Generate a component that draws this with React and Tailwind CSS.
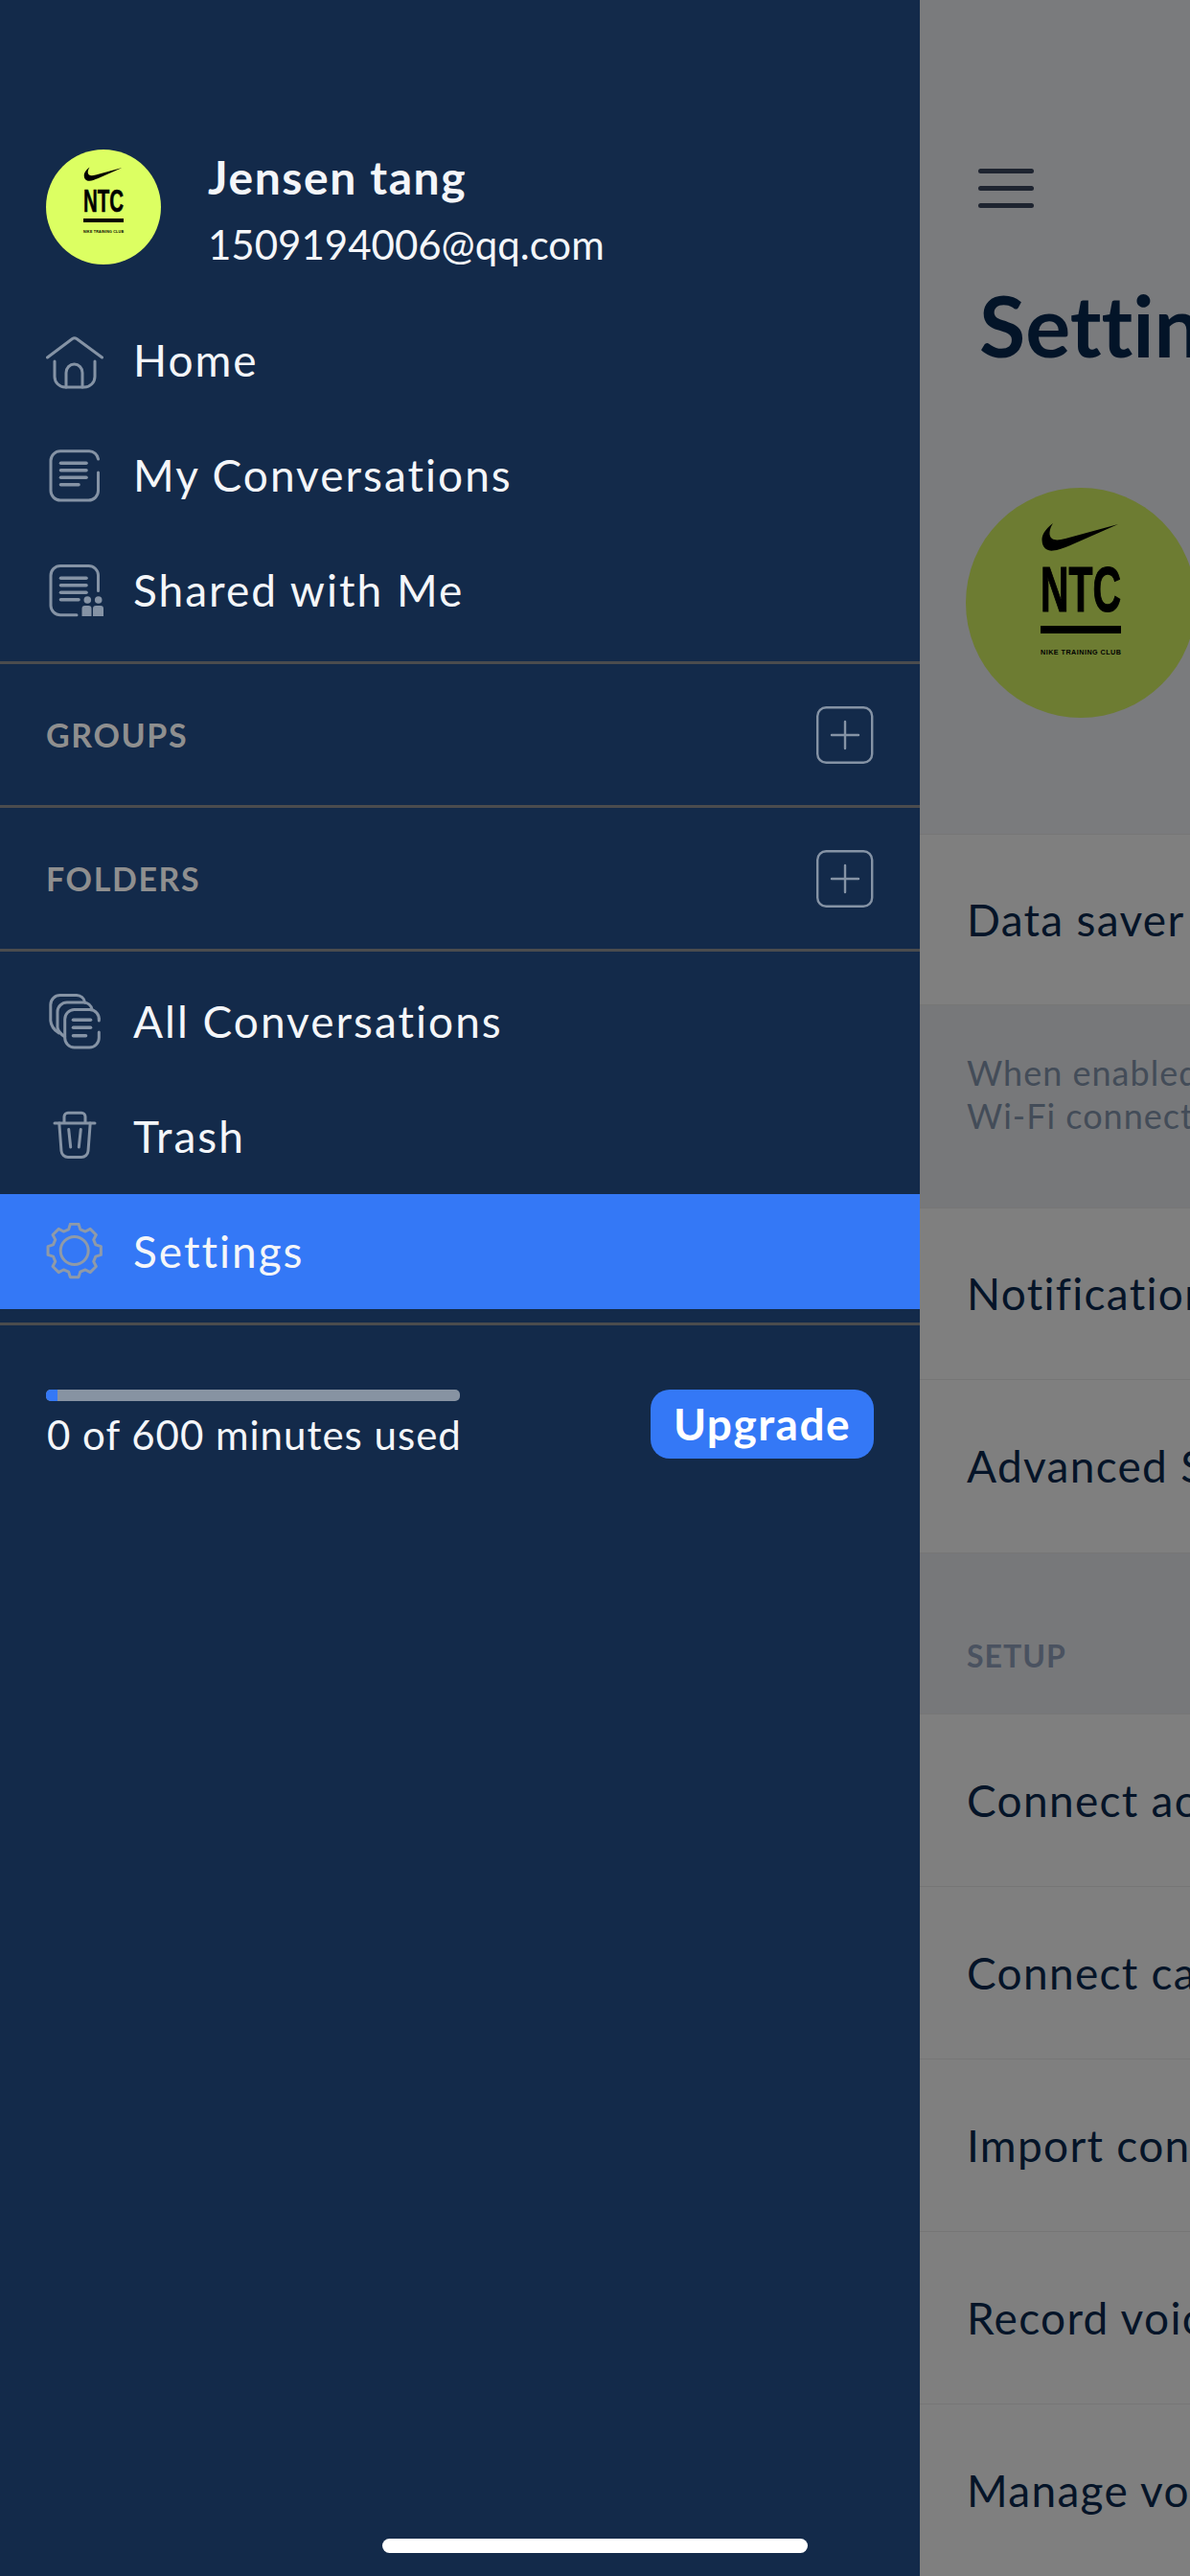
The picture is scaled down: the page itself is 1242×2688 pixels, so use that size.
const FONT = "font-['Lato','Noto_Sans',sans-serif] [font-variant-ligatures:none]"

// gear outline, 8 teeth
const gearPoints = () => {
  const pts = []
  const n = 8
  for (let i = 0; i < n; i++) {
    const a = (i / n) * Math.PI * 2 - Math.PI / 2
    const step = (Math.PI * 2) / n
    const add = (r, t) => pts.push(`${(29.7 + r * Math.cos(a + t)).toFixed(2)},${(29 + r * Math.sin(a + t)).toFixed(2)}`)
    add(23, -step * 0.34)
    add(28, -step * 0.2)
    add(28, step * 0.2)
    add(23, step * 0.34)
  }
  return pts.join(' ')
}

const Icon = ({ children }) => (
  <svg width="60" height="60" viewBox="0 0 60 60" fill="none" stroke="#8593a5" strokeWidth="3" strokeLinecap="round" strokeLinejoin="round" className="shrink-0">
    {children}
  </svg>
)

const HomeIcon = () => (
  <Icon>
    <path d="M1.5 27 L27.5 7.5 Q29.7 6 32 7.5 L58.5 27" />
    <path d="M9 31 V47 A11 11 0 0 0 20 58 H40 A11 11 0 0 0 51 47 V31" />
    <path d="M21 58 V43 A8.5 9 0 0 1 38 43 V58" />
  </Icon>
)

const DocIcon = () => (
  <Icon>
    <path d="M54.5 13 A9.5 9.5 0 0 0 45 4.8 H15 A10 10 0 0 0 5 14.8 V46 A10 10 0 0 0 15 56 H44.5 A10 10 0 0 0 54.5 46 V27" />
    <g strokeWidth="3.6">
      <path d="M15.5 17.3 H42" />
      <path d="M15.5 24.7 H42" />
      <path d="M15.5 32.3 H42" />
      <path d="M15.5 39.7 H34" />
    </g>
  </Icon>
)

const SharedIcon = () => (
  <Icon>
    <path d="M54.5 30.5 V14 A10 10 0 0 0 44.5 4.5 H15 A10 10 0 0 0 5 14.5 V46 A10 10 0 0 0 15 55.8 H32" />
    <g strokeWidth="3.6">
      <path d="M15.5 17.3 H42" />
      <path d="M15.5 24.7 H42" />
      <path d="M15.5 32.3 H42" />
      <path d="M15.5 39.7 H34" />
    </g>
    <g fill="#8593a5" stroke="none">
      <circle cx="43.3" cy="40" r="3.8" />
      <circle cx="54.7" cy="40" r="3.8" />
      <path d="M37.5 57 V49 A3 3 0 0 1 40.5 46 H44.5 A3 3 0 0 1 47.5 49 V57 Z" />
      <path d="M49 57 V49 A3 3 0 0 1 52 46 H57 A3 3 0 0 1 60 49 V57 Z" />
    </g>
  </Icon>
)

const StackIcon = () => (
  <Icon>
    <path d="M55.3 29 A10 10 0 0 0 45.5 17.5 H29.5 A10 10 0 0 0 19.7 27.5 V47 A10 10 0 0 0 29.5 57 H45.5 A10 10 0 0 0 55.3 47 V41" />
    <path d="M48 17.3 A9 9 0 0 0 39.5 10 H22 A10 10 0 0 0 12 20 V36 Q12.5 41 19.7 46" />
    <path d="M40.6 10 A9 9 0 0 0 32 2.5 H15 A10 10 0 0 0 4.8 12.5 V29 Q5.5 37 13.5 42" />
    <g strokeWidth="3.6">
      <path d="M28.5 28.3 H46.5" />
      <path d="M28.5 36.3 H46.5" />
      <path d="M28.5 44.7 H41.5" />
    </g>
  </Icon>
)

const TrashIcon = () => (
  <Icon>
    <path d="M9 16 H51" />
    <path d="M19 15 V9 A4 4 0 0 1 23 5.2 H37 A4 4 0 0 1 41 9 V15" />
    <path d="M13.8 16 L16 45 A7 7 0 0 0 23 51.5 H37 A7 7 0 0 0 44 45 L46.2 16" />
    <path d="M23.7 22.5 L25.7 41" />
    <path d="M36.3 22.5 L34.3 41" />
  </Icon>
)

const GearIcon = () => (
  <Icon>
    <g stroke="#8f9aa8">
      <polygon points={gearPoints()} />
      <circle cx="29.7" cy="29" r="14.5" />
    </g>
  </Icon>
)

const PlusBox = () => (
  <svg width="60" height="60" viewBox="0 0 60 60" fill="none" stroke="#8593a5" className="shrink-0">
    <rect x="1.2" y="1.2" width="57" height="57.6" rx="9" strokeWidth="2.4" />
    <path d="M30 16 V44 M16 30 H44" strokeWidth="2.4" strokeLinecap="round" />
  </svg>
)

// NTC badge, drawn in a 120 box and scaled
const NtcLogo = ({ size, bg }) => (
  <svg width={size} height={size} viewBox="0 0 120 120" className="shrink-0">
    <circle cx="60" cy="60" r="60" fill={bg} />
    <path
      fill="#000"
      d="M45.5 18.5 C41 22 39.5 25 39.8 27.8 C40 31.5 42.5 33 45.5 32.8 C48 32.6 51 31.5 54 30.3 L79.5 19 L52 26.5 C49 27.3 46.5 27.6 45 26.5 C43 25 43.6 21.5 45.5 18.5 Z"
    />
    <text x="39" y="64.5" textLength="42" lengthAdjust="spacingAndGlyphs" fontFamily="'Liberation Sans',sans-serif" fontWeight="700" fontSize="33" fill="#000" stroke="#000" strokeWidth="0.6">NTC</text>
    <rect x="39" y="72" width="42" height="4" fill="#000" />
    <text x="39" y="87" textLength="42" lengthAdjust="spacing" fontFamily="'Liberation Sans',sans-serif" fontWeight="700" fontSize="3.6" fill="#000">NIKE TRAINING CLUB</text>
  </svg>
)

const NavRow = ({ icon: I, label, active }) => (
  <div className={`h-[120px] pl-[48px] flex items-center gap-[31px] ${active ? 'bg-[#3478f6]' : ''}`}>
    <I />
    <span className="text-[46px] leading-none tracking-[2px] text-[#f4f6f9]">{label}</span>
  </div>
)

const SectionRow = ({ label }) => (
  <div className="h-[147px] px-[48px] flex items-center justify-between">
    <span className="text-[34px] font-bold tracking-[1.6px] text-[#8f8f8f]">{label}</span>
    <PlusBox />
  </div>
)

const Divider = () => <div className="h-[3px] bg-[#4b4c4e]" />

const SetRow = ({ label, h = 'h-[180px]' }) => (
  <div className={`${h} pl-[49px] flex items-center bg-[#7f7f7f] border-b border-[#767676]`}>
    <span className="text-[46px] leading-none tracking-[1.3px] text-[#051428] whitespace-nowrap">{label}</span>
  </div>
)

export default function App() {
  return (
    <div className={`relative flex w-[1242px] h-[2688px] overflow-hidden ${FONT}`}>

      {/* Drawer */}
      <aside className="w-[960px] shrink-0 bg-[#132a4a] pt-[156px]">
        <div className="h-[120px] pl-[48px] flex items-center gap-[49px]">
          <NtcLogo size={120} bg="#dcff62" />
          <div className="pt-[8px]">
            <div className="text-[48px] leading-[56px] font-bold tracking-[1.6px] text-[#f4f6f9]">Jensen tang</div>
            <div className="text-[42px] leading-[56px] mt-[14px] text-[#f4f6f9]">1509194006@qq.com</div>
          </div>
        </div>

        <nav className="mt-[40px] pb-[14px]">
          <NavRow icon={HomeIcon} label="Home" />
          <NavRow icon={DocIcon} label="My Conversations" />
          <NavRow icon={SharedIcon} label="Shared with Me" />
        </nav>
        <Divider />
        <SectionRow label="GROUPS" />
        <Divider />
        <SectionRow label="FOLDERS" />
        <Divider />
        <nav className="pt-[13px] pb-[14px]">
          <NavRow icon={StackIcon} label="All Conversations" />
          <NavRow icon={TrashIcon} label="Trash" />
          <NavRow icon={GearIcon} label="Settings" active />
        </nav>
        <Divider />

        <div className="pl-[48px] pr-[48px] pt-[67px] flex items-start justify-between">
          <div className="w-[432px]">
            <div className="h-[12px] rounded-[5px] bg-[#8793a2] overflow-hidden">
              <div className="h-full w-[12px] bg-[#3478f6]" />
            </div>
            <div className="mt-[10px] pl-[1px] text-[42px] leading-[50px] tracking-[1px] text-[#f4f6f9] whitespace-nowrap">0 of 600 minutes used</div>
          </div>
          <button className="w-[233px] h-[72px] rounded-[20px] bg-[#3478f6] text-white text-[46px] font-bold tracking-[1.5px] leading-none">Upgrade</button>
        </div>
      </aside>

      {/* Dimmed settings page behind the drawer */}
      <main className="flex-1 min-w-0 overflow-hidden bg-[#7a7b7d]">
        <div className="h-[871px] border-b border-[#767676]">
          <div className="pt-[176px] pl-[61px]">
            <div className="w-[58px] flex flex-col gap-[13px]">
              <div className="h-[5px] rounded-full bg-[#1e2430]" />
              <div className="h-[5px] rounded-full bg-[#1e2430]" />
              <div className="h-[5px] rounded-full bg-[#1e2430]" />
            </div>
          </div>
          <h1 className="mt-[72px] pl-[62px] text-[88px] leading-[100px] font-bold text-[#031428] whitespace-nowrap">Settings</h1>
          <div className="mt-[120px] pl-[48px]">
            <NtcLogo size={240} bg="#6d7c32" />
          </div>
        </div>

        <SetRow label="Data saver mode" h="h-[178px]" />
        <div className="h-[212px] pl-[49px] pt-[48px] bg-[#77787a] border-b border-[#767676]">
          <p className="text-[36px] leading-[45px] tracking-[1px] text-[#434c58] whitespace-nowrap">
            When enabled, recordings only sync over a<br />Wi-Fi connection.
          </p>
        </div>
        <SetRow label="Notifications" h="h-[179px]" />
        <SetRow label="Advanced Settings" h="h-[181px]" />

        <div className="h-[168px] pl-[49px] pt-[87px] bg-[#77787a] border-b border-[#767676]">
          <span className="block text-[32px] leading-[40px] font-bold tracking-[1px] text-[#4a5260]">SETUP</span>
        </div>
        <SetRow label="Connect accounts" />
        <SetRow label="Connect calendar" />
        <SetRow label="Import contacts" />
        <SetRow label="Record voice print" />
        <SetRow label="Manage voice prints" />
      </main>

      {/* Home indicator */}
      <div className="absolute left-[399px] top-[2649px] w-[444px] h-[15px] rounded-full bg-white" />
    </div>
  )
}
